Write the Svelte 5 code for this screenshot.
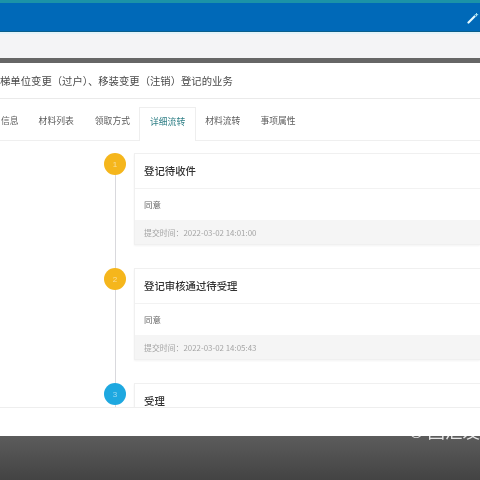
<script>
  const tabs = [
    { label: '信息', active: false },
    { label: '材料列表', active: false },
    { label: '领取方式', active: false },
    { label: '详细流转', active: true },
    { label: '材料流转', active: false },
    { label: '事项属性', active: false }
  ];
  const steps = [
    { n: 1, color: '#f5b61c', title: '登记待收件', note: '同意', time: '提交时间：2022-03-02 14:01:00' },
    { n: 2, color: '#f5b61c', title: '登记审核通过待受理', note: '同意', time: '提交时间：2022-03-02 14:05:43' },
    { n: 3, color: '#1ea8e0', title: '受理', note: '', time: '' }
  ];
</script>

<div class="page">
  <header class="topbar">
    <svg class="wand" viewBox="0 0 12 12" width="12" height="12" aria-hidden="true">
      <path d="M1.5 10.5 L7.5 4.5" stroke="#e8fbff" stroke-width="2.2" stroke-linecap="round" />
      <path d="M9.5 1 V4.4 M7.8 2.7 H11.2" stroke="#a8e4f2" stroke-width="1" />
    </svg>
  </header>
  <div class="subbar"></div>
  <div class="divider"></div>

  <main class="panel">
    <h1 class="title">梯单位变更（过户）、移装变更（注销）登记的业务</h1>

    <nav class="tabs">
      {#each tabs as tab}
        <span class="tab" class:active={tab.active}>{tab.label}</span>
      {/each}
    </nav>

    <section class="timeline">
      {#each steps as step}
        <div class="step">
          <div class="dot" style="background:{step.color}">{step.n}</div>
          <article class="card">
            <h2 class="card-title">{step.title}</h2>
            {#if step.note}
              <p class="note">{step.note}</p>
              <p class="time">{step.time}</p>
            {/if}
          </article>
        </div>
      {/each}
    </section>
  </main>

  <div class="whitespace"></div>
  <footer class="footer">
    <span class="mark">© 国汇发</span>
  </footer>
</div>

<style>
  :global(body) {
    margin: 0;
    background: #fff;
  }
  .page {
    width: 480px;
    height: 480px;
    overflow: hidden;
    display: flex;
    flex-direction: column;
    font-family: "Noto Sans CJK SC", "Liberation Sans", sans-serif;
    color: #555;
    filter: blur(0.4px);
  }
  .topbar {
    height: 28px;
    flex: none;
    background: #0069b8;
    border-top: 3px solid #1b93a8;
    border-bottom: 1px solid #0a5e8c;
    display: flex;
    align-items: center;
    justify-content: flex-end;
    padding-right: 1px;
  }
  .wand {
    margin-top: 2px;
  }
  .subbar {
    height: 24px;
    flex: none;
    background: #f4f4f6;
    border-top: 2px solid #e3f3fa;
  }
  .divider {
    height: 5px;
    flex: none;
    background: #666;
  }
  .panel {
    height: 345px;
    flex: none;
    overflow: hidden;
    border-bottom: 1px solid #eeeeee;
    box-sizing: border-box;
  }
  .title {
    margin: 0;
    height: 35px;
    line-height: 36px;
    font-size: 10.35px;
    font-weight: 400;
    color: #4a4a4a;
    white-space: nowrap;
    border-bottom: 1px solid #eaeaea;
  }
  .tabs {
    height: 41px;
    display: flex;
    align-items: stretch;
    border-bottom: 1px solid #efefef;
    font-size: 8.8px;
  }
  .tab {
    display: flex;
    align-items: center;
    color: #5c5c5c;
    margin-right: 21px;
    padding-top: 1px;
  }
  .tab:first-child {
    margin-left: 1px;
    margin-right: 20px;
  }
  .tab:nth-child(3) {
    margin-right: 9px;
  }
  .tab.active {
    color: #2f7f86;
    padding: 0 10px;
    margin-right: 9px;
    margin-top: 8px;
    margin-bottom: -1px;
    padding-bottom: 7px;
    background: #fff;
    border-left: 1px solid #eee;
    border-right: 1px solid #eee;
    border-top: 1px solid #eee;
  }
  .tab:nth-child(5) {
    margin-right: 20px;
  }
  .timeline {
    position: relative;
    padding: 12px 0 0 104px;
  }
  .timeline::before {
    content: "";
    position: absolute;
    left: 115px;
    top: 13px;
    width: 1px;
    height: 300px;
    background: #d9d9dd;
  }
  .step {
    display: grid;
    grid-template-columns: 22px 1fr;
    column-gap: 8px;
    margin-bottom: 23px;
    position: relative;
  }
  .dot {
    width: 22px;
    height: 22px;
    border-radius: 50%;
    color: rgba(255, 255, 255, 0.55);
    font-size: 8px;
    display: flex;
    align-items: center;
    justify-content: center;
    font-family: "Liberation Sans", sans-serif;
  }
  .card {
    border: 1px solid #f0f0f0;
    border-right: none;
    box-shadow: 0 1px 2px rgba(0, 0, 0, 0.05);
    width: 346px;
    box-sizing: border-box;
  }
  .card-title {
    margin: 0;
    height: 34px;
    line-height: 34px;
    padding-left: 9px;
    font-size: 10.4px;
    font-weight: 500;
    color: #333;
    border-bottom: 1px solid #f2f2f2;
  }
  .note {
    margin: 0;
    height: 31px;
    line-height: 30px;
    padding-left: 9px;
    font-size: 8.5px;
    color: #666;
  }
  .time {
    margin: 0;
    height: 24px;
    line-height: 25px;
    padding-left: 9px;
    font-size: 7.9px;
    color: #a5a5a5;
    background: #f5f5f5;
  }
  .whitespace {
    height: 28px;
    flex: none;
    background: #fff;
  }
  .footer {
    flex: 1;
    background: linear-gradient(#5c5c5c, #434343);
    position: relative;
    overflow: hidden;
  }
  .mark {
    position: absolute;
    right: 0;
    top: -18px;
    color: #e6e6e6;
    font-size: 17.5px;
    white-space: nowrap;
  }
</style>
